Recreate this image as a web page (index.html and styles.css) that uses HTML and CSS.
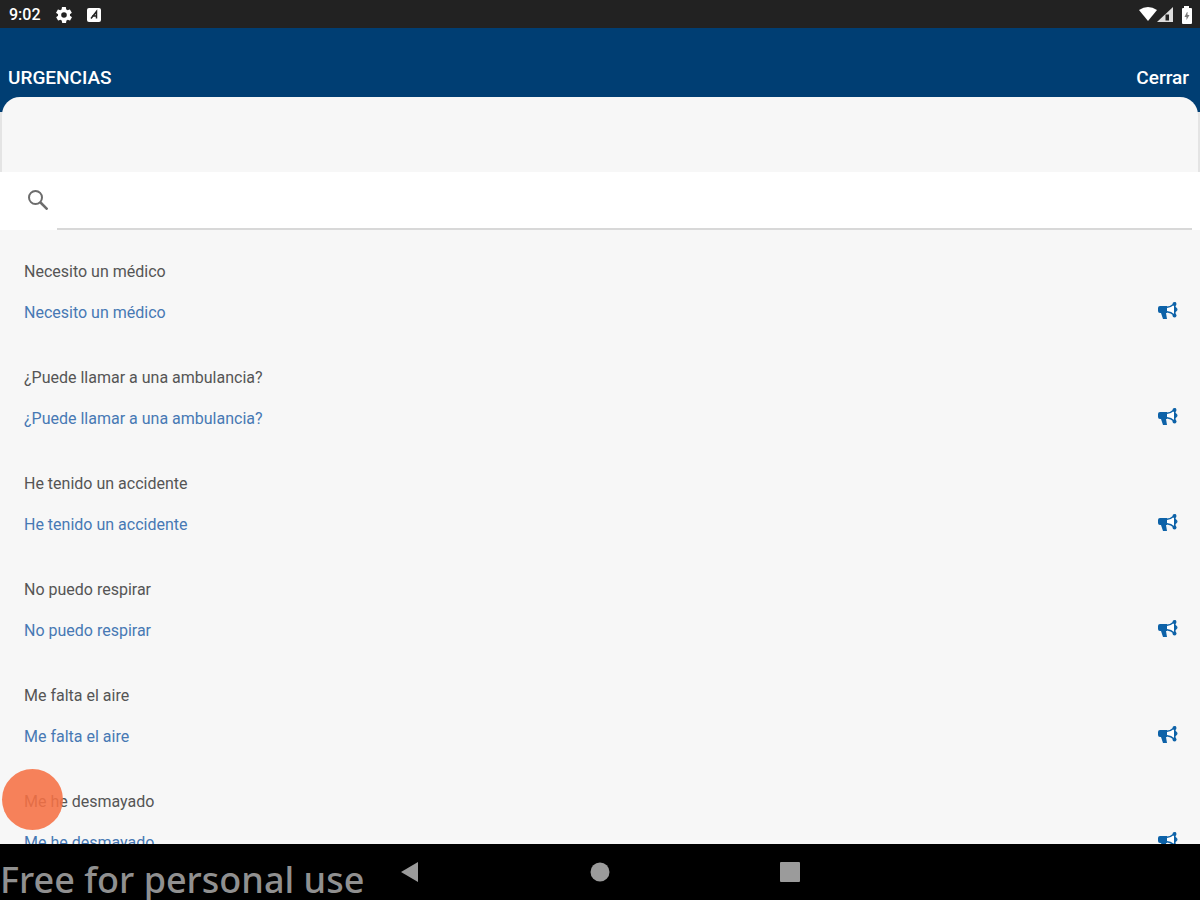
FILE: index.html
```
<!DOCTYPE html>
<html lang="es">
<head>
    <meta charset="UTF-8">
    <meta name="viewport" content="width=device-width, initial-scale=1.0">
    <title>Urgencias</title>
    <link rel="stylesheet" href="styles.css">
</head>
<body>
    <svg class="sprite" aria-hidden="true">
        <symbol id="megaphone" viewBox="0 0 20 18">
            <path d="M2 4h7v7H8l1 6H5l-2-6H2a2 2 0 0 1-2-2V6a2 2 0 0 1 2-2z" fill="#0d62a8"/>
            <path d="M9 5.200C12 5 14.500 3.500 16.800 1.500v12C14.500 11.500 12 10 9 9.800" fill="#fff" stroke="#0d62a8" stroke-width="1.600"/>
            <circle cx="16.500" cy="2" r="2" fill="#0d62a8"/>
            <circle cx="16.500" cy="13.500" r="2" fill="#0d62a8"/>
            <path d="M17 5.500a2 2 0 0 1 0 4z" fill="#0d62a8" stroke="#0d62a8"/>
        </symbol>
    </svg>

    <div class="status-bar">
        <span class="clock">9:02</span>
        <svg class="status-icon gear" viewBox="2 2 20 20" aria-hidden="true">
            <path fill="#fff" d="M19.400 13c0-.3.100-.6.100-1s0-.7-.1-1l2.100-1.600c.2-.2.200-.4.100-.6l-2-3.500c-.1-.2-.4-.3-.6-.2l-2.500 1c-.5-.4-1.100-.7-1.700-1l-.4-2.600c0-.3-.2-.5-.5-.5h-4c-.2 0-.4.200-.5.400l-.4 2.700c-.6.200-1.100.6-1.700 1l-2.500-1c-.2-.1-.5 0-.6.200l-2 3.500c-.1.200-.1.500.1.600L4.600 11c0 .3-.1.700-.1 1s0 .7.100 1l-2.100 1.600c-.2.200-.3.400-.1.600l2 3.500c.1.200.4.300.6.200l2.500-1c.5.400 1.100.7 1.700 1l.4 2.600c0 .3.200.5.500.5h4c.2 0 .4-.2.500-.4l.4-2.700c.6-.2 1.100-.6 1.700-1l2.500 1c.2.100.5 0 .6-.2l2-3.500c.1-.2.100-.5-.1-.6zM12 15.500a3.500 3.500 0 1 1 0-7 3.500 3.500 0 0 1 0 7z"/>
        </svg>
        <svg class="status-icon card" viewBox="0 0 14 14" aria-hidden="true">
            <rect width="14" height="14" rx="2" fill="#fff"/>
            <path d="M4 10.500l5.500-7v7M5 8h4" fill="none" stroke="#222" stroke-width="1.500"/>
        </svg>
        <svg class="signal" viewBox="0 0 54 18" aria-hidden="true">
            <path d="M1 4Q10-2 19 4L10 15z" fill="#fff"/>
            <path d="M19 16L35 1v15z" fill="#ddd"/>
            <path d="M27.500 8.500h3.500v6h-3.500z" fill="#222"/>
            <path d="M46 0h5v2h2q1 0 1 1v14q0 1-1 1h-8q-1 0-1-1V3q0-1 1-1h1z" fill="#fff"/>
            <path d="M49 6l-2.500 5h2v3l3-5h-2V6z" fill="#777"/>
        </svg>
    </div>

    <header class="header">
        <h1>URGENCIAS</h1>
        <button type="button" class="close">Cerrar</button>
    </header>

    <div class="panel-wrap">
        <div class="panel"></div>
    </div>

    <form class="search" role="search">
        <label for="search">
            <svg viewBox="0 0 20 20" width="20" height="20" role="img" aria-label="Buscar">
                <circle cx="7.500" cy="7.500" r="6.500" fill="none" stroke="#6c6c6c" stroke-width="2"/>
                <path d="M12 12l7.500 7.500" stroke="#6c6c6c" stroke-width="2.500"/>
            </svg>
        </label>
        <input type="search" id="search">
    </form>

    <main class="list">
        <div class="phrase">
            <div>
                <p>Necesito un médico</p>
                <p class="translation">Necesito un médico</p>
            </div>
            <button type="button" class="speak" aria-label="Escuchar"><svg><use href="#megaphone"/></svg></button>
        </div>
        <div class="phrase">
            <div>
                <p>¿Puede llamar a una ambulancia?</p>
                <p class="translation">¿Puede llamar a una ambulancia?</p>
            </div>
            <button type="button" class="speak" aria-label="Escuchar"><svg><use href="#megaphone"/></svg></button>
        </div>
        <div class="phrase">
            <div>
                <p>He tenido un accidente</p>
                <p class="translation">He tenido un accidente</p>
            </div>
            <button type="button" class="speak" aria-label="Escuchar"><svg><use href="#megaphone"/></svg></button>
        </div>
        <div class="phrase">
            <div>
                <p>No puedo respirar</p>
                <p class="translation">No puedo respirar</p>
            </div>
            <button type="button" class="speak" aria-label="Escuchar"><svg><use href="#megaphone"/></svg></button>
        </div>
        <div class="phrase">
            <div>
                <p>Me falta el aire</p>
                <p class="translation">Me falta el aire</p>
            </div>
            <button type="button" class="speak" aria-label="Escuchar"><svg><use href="#megaphone"/></svg></button>
        </div>
        <div class="phrase">
            <div>
                <p>Me he desmayado</p>
                <p class="translation">Me he desmayado</p>
            </div>
            <button type="button" class="speak" aria-label="Escuchar"><svg><use href="#megaphone"/></svg></button>
        </div>
    </main>

    <nav class="nav-bar">
        <button type="button" aria-label="Atrás"><svg viewBox="0 0 20 20"><path d="M1 10L18 0v20z"/></svg></button>
        <button type="button" aria-label="Inicio"><svg viewBox="0 0 20 20"><circle cx="10" cy="10" r="9.500"/></svg></button>
        <button type="button" aria-label="Recientes"><svg viewBox="0 0 20 20"><rect width="20" height="20" rx="1"/></svg></button>
        <span class="watermark">Free for personal use</span>
        <span class="bubble"></span>
    </nav>
</body>
</html>
```

FILE: styles.css
```
* {
    box-sizing: border-box;
}

body {
    display: flex;
    flex-direction: column;
    height: 100vh;
    margin: 0;
    overflow: hidden;
    font-family: Roboto, sans-serif;
    background: #f7f7f7;
}

button {
    padding: 0;
    border: none;
    background: none;
    font-family: inherit;
    cursor: pointer;
}

svg {
    display: block;
}

.sprite {
    position: absolute;
    width: 0;
    height: 0;
}

.status-bar {
    display: flex;
    flex: none;
    align-items: center;
    height: 28px;
    padding: 2px 8px 0 9px;
    background: #222;
    color: #fff;
}

.clock {
    font-size: 16px;
    font-weight: 500;
    line-height: 28px;
}

.status-icon {
    width: 16px;
    height: 16px;
    margin-left: 15px;
}

.card {
    width: 14px;
    height: 14px;
}

.signal {
    width: 54px;
    height: 18px;
    margin-left: auto;
}

.header {
    display: flex;
    flex: none;
    align-items: flex-end;
    justify-content: space-between;
    height: 69px;
    padding: 0 11px 7px 8px;
    background: #003e73;
    color: #fff;
}

.header h1,
.close {
    margin: 0;
    color: #fff;
    font-size: 19px;
    font-weight: 500;
    line-height: 24px;
}

.panel-wrap {
    flex: none;
    background: linear-gradient(#003e73 15px, #e4e4e4 15px);
}

.panel {
    height: 75px;
    margin: 0 2px;
    border-radius: 18px 18px 0 0;
    background: #f7f7f7;
}

.search {
    display: flex;
    flex: none;
    height: 58px;
    padding-right: 8px;
    background: #fff;
}

.search label {
    display: flex;
    align-items: center;
    width: 57px;
    padding: 0 0 2px 28px;
}

.search input {
    flex: 1;
    min-width: 0;
    padding: 0 8px;
    border: none;
    border-bottom: 2px solid #d8d8d8;
    border-radius: 0;
    outline: none;
    background: none;
    font-family: inherit;
    font-size: 16px;
}

.list {
    flex: 1;
    min-height: 0;
    overflow: hidden;
}

.phrase {
    display: flex;
    align-items: center;
    justify-content: space-between;
    height: 106px;
    padding: 18px 22px 0 24px;
}

.phrase p {
    margin: 0;
    color: #555;
    font-size: 16px;
    line-height: 20px;
}

.phrase .translation {
    margin-top: 21px;
    color: #4779b4;
}

.speak {
    align-self: flex-end;
    padding-bottom: 16px;
}

.speak svg {
    width: 20px;
    height: 18px;
}

.nav-bar {
    position: relative;
    display: flex;
    flex: none;
    align-items: center;
    justify-content: center;
    gap: 170px;
    height: 56px;
    background: #000;
}

.nav-bar svg {
    width: 20px;
    height: 20px;
    fill: #9b9b9b;
}

.watermark {
    position: absolute;
    left: 0;
    bottom: -4px;
    color: #909090;
    font-family: "Noto Sans", sans-serif;
    font-size: 36px;
    font-weight: 500;
    line-height: 48px;
}

.bubble {
    position: absolute;
    left: 2px;
    bottom: 70px;
    width: 61px;
    height: 61px;
    border-radius: 50%;
    background: rgba(246, 113, 68, 0.88);
}
```
